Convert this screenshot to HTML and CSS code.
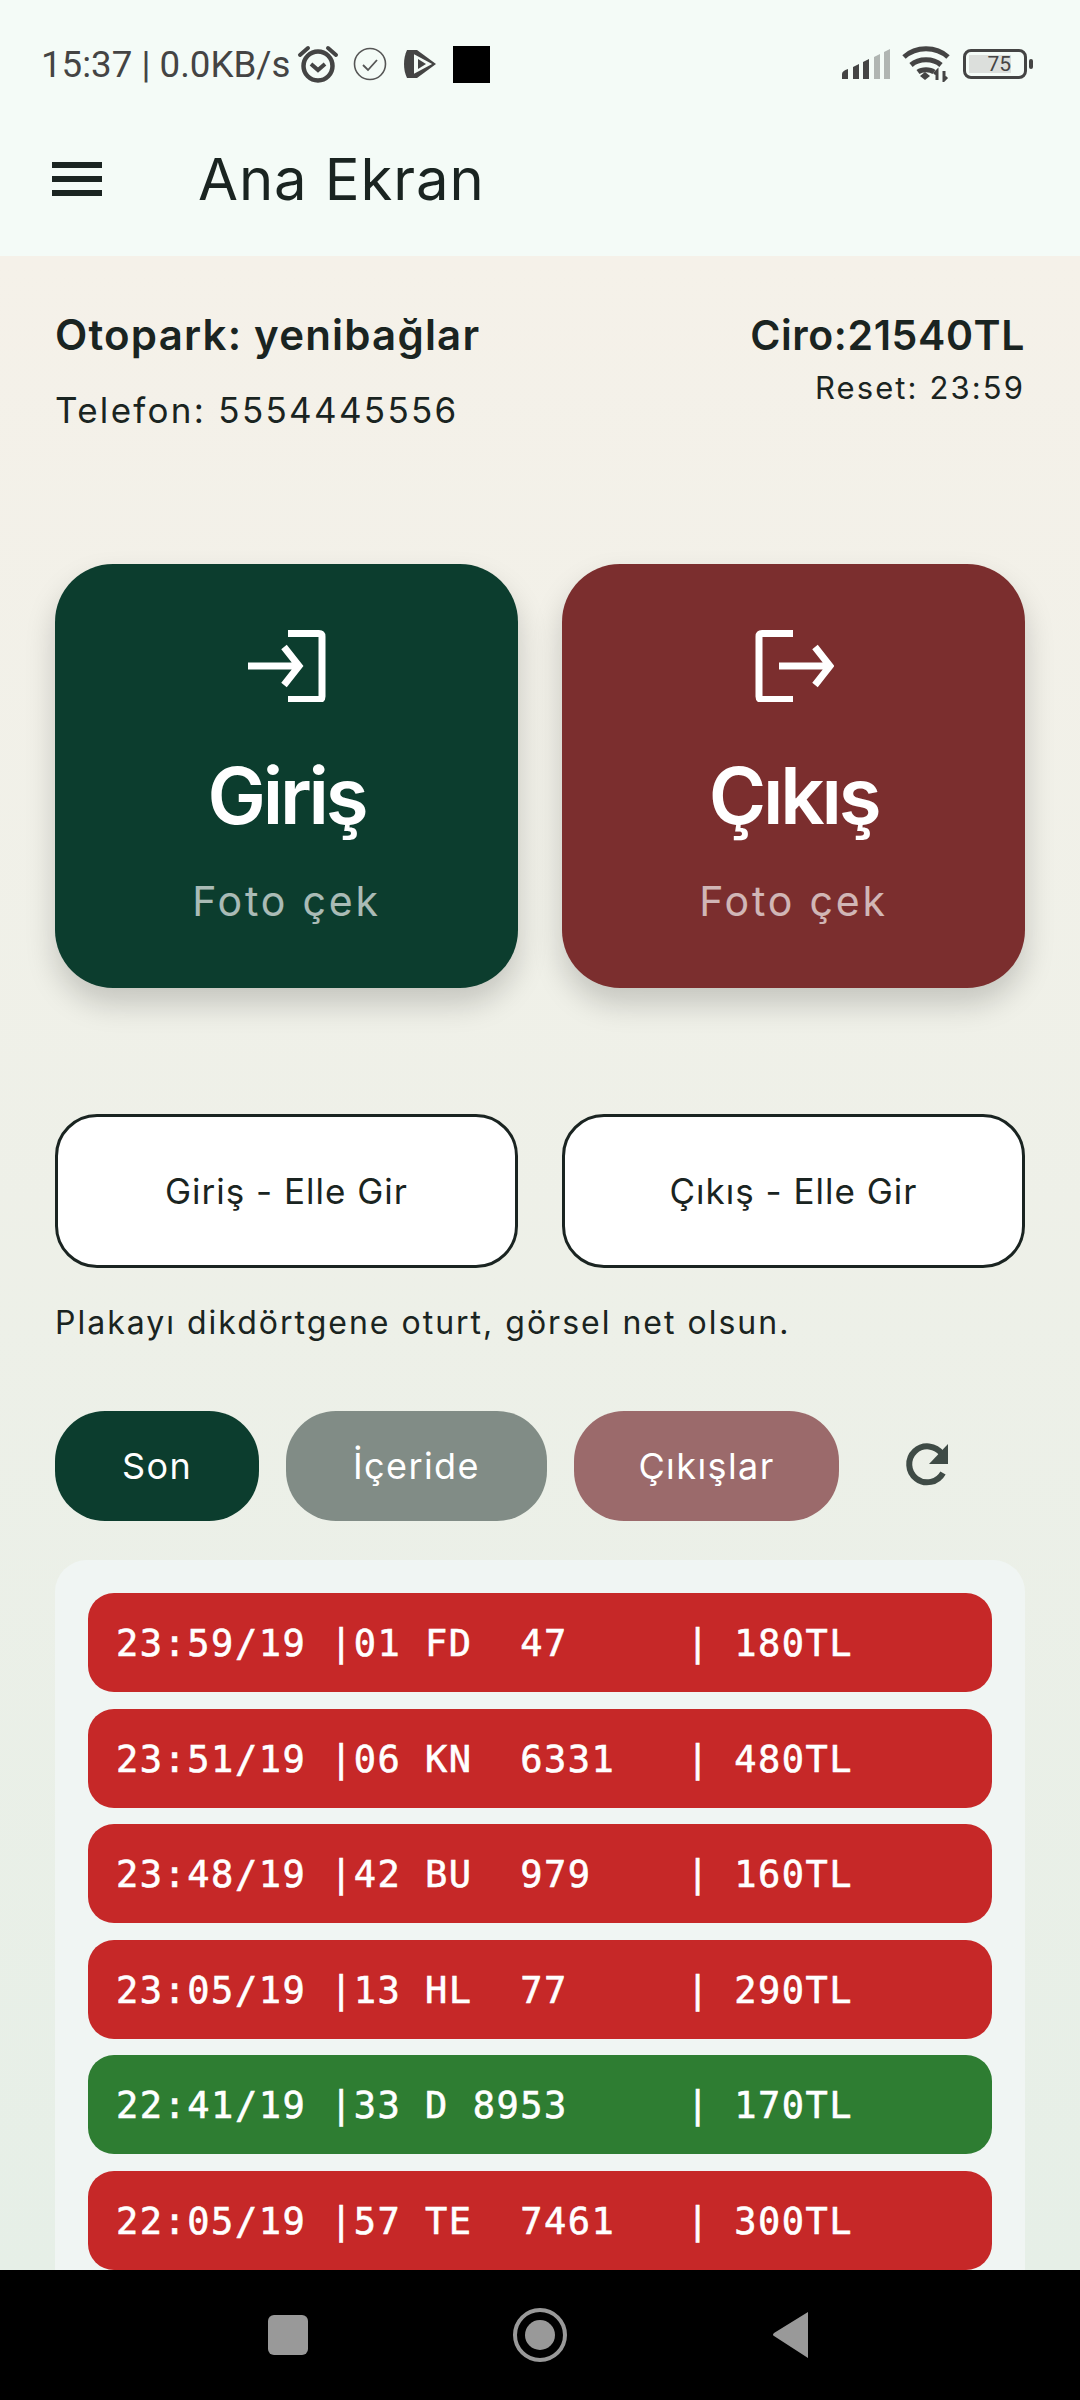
FILE: index.html
```html
<!DOCTYPE html>
<html lang="tr">
<head>
    <meta charset="UTF-8">
    <title>Ana Ekran</title>
    <link rel="stylesheet" href="styles.css">
</head>
<body>
<div class="ekran">
    <div class="ust">
        <div class="durum">
            <span class="saat">15:37 | 0.0KB/s</span>
            <svg class="ikon-alarm" width="42" height="40" viewBox="0 0 42 40">
                <circle cx="21" cy="22" r="14.5" fill="none" stroke="#444" stroke-width="4.5"/>
                <path d="M14 20l7 6 7-6" fill="none" stroke="#444" stroke-width="4"/>
                <path d="M3 11l8-7M39 11l-8-7" fill="none" stroke="#444" stroke-width="4" stroke-linecap="round"/>
            </svg>
            <svg class="ikon-tik" width="34" height="34" viewBox="0 0 34 34">
                <circle cx="17" cy="17" r="15.5" fill="none" stroke="#555" stroke-width="1.6"/>
                <path d="M10 18l5 5 9-10" fill="none" stroke="#555" stroke-width="1.8"/>
            </svg>
            <svg class="ikon-play" width="34" height="30" viewBox="0 0 34 30">
                <path d="M4 1l10 0 19 14-19 14-10 0c-4-8-4-20 0-28z" fill="#444"/>
                <path d="M12 7l15 8-15 8z" fill="#f4fbf7" stroke="#f4fbf7" stroke-width="2"/>
                <path d="M15 10l8 5-8 5z" fill="#444"/>
            </svg>
            <span class="kare"></span>
            <span class="bosluk"></span>
            <svg class="ikon-sinyal" width="48" height="32" viewBox="0 0 48 32">
                <path d="M0 31v-5q0-3 6-5v10z" fill="#444"/>
                <path d="M11 31v-12l6-3v15z" fill="#444"/>
                <path d="M21 31v-17l6-3v20z" fill="#444"/>
                <path d="M32 31v-22l6-3v25z" fill="#b0b5b2"/>
                <path d="M42 31v-27l6-3v30z" fill="#b0b5b2"/>
            </svg>
            <svg class="ikon-wifi" width="48" height="36" viewBox="0 0 48 36">
                <path d="M2 11c12-11 32-11 44 0" fill="none" stroke="#444" stroke-width="5"/>
                <path d="M9 19c8-7 22-7 30 0" fill="none" stroke="#444" stroke-width="5"/>
                <path d="M16 26c4-3 12-3 16 0" fill="none" stroke="#444" stroke-width="5"/>
                <path d="M18 30l5-4 5 4-5 4z" fill="#444"/>
                <path d="M35 34v-9l-3 3M42 25v9l3-3" fill="none" stroke="#444" stroke-width="3"/>
            </svg>
            <div class="pil">
                <div class="pil-govde"><span class="pil-dolu">75</span></div>
                <span class="pil-uc"></span>
            </div>
        </div>
        <div class="baslik">
            <div class="menu"><span></span><span></span><span></span></div>
            <h1>Ana Ekran</h1>
        </div>
    </div>

    <div class="icerik">
        <div class="bilgi">
            <div>
                <div class="otopark">Otopark: yenibağlar</div>
                <div class="telefon">Telefon: 5554445556</div>
            </div>
            <div class="sag">
                <div class="ciro">Ciro:21540TL</div>
                <div class="reset">Reset: 23:59</div>
            </div>
        </div>

        <div class="kartlar">
            <div class="kart giris">
                <svg width="80" height="72" viewBox="0 0 80 72">
                    <path d="M41 3.500h31q3 0 3 3v60q0 3-3 3H41" fill="none" stroke="#fff" stroke-width="7"/>
                    <path d="M1 36h50M37 17l15 19-15 19" fill="none" stroke="#fff" stroke-width="7"/>
                </svg>
                <div class="kart-ad">Giriş</div>
                <div class="kart-alt">Foto çek</div>
            </div>
            <div class="kart cikis">
                <svg width="80" height="72" viewBox="0 0 80 72">
                    <path d="M39 3.500H8q-3 0-3 3v60q0 3 3 3h31" fill="none" stroke="#fff" stroke-width="7"/>
                    <path d="M25 36h50M61 17l15 19-15 19" fill="none" stroke="#fff" stroke-width="7"/>
                </svg>
                <div class="kart-ad">Çıkış</div>
                <div class="kart-alt">Foto çek</div>
            </div>
        </div>

        <div class="elle">
            <button>Giriş - Elle Gir</button>
            <button>Çıkış - Elle Gir</button>
        </div>
        <p class="ipucu">Plakayı dikdörtgene oturt, görsel net olsun.</p>

        <div class="sekmeler">
            <span class="sekme son">Son</span>
            <span class="sekme iceride">İçeride</span>
            <span class="sekme cikislar">Çıkışlar</span>
            <svg class="yenile" width="48" height="48" viewBox="0 0 48 48">
                <path d="M39 31a18 18 0 1 1-1-19" fill="none" stroke="#3f4b46" stroke-width="6"/>
                <path d="M44 2v20H25z" fill="#3f4b46"/>
            </svg>
        </div>

        <div class="liste">
            <div class="satir kirmizi">23:59/19 |01 FD  47     | 180TL</div>
            <div class="satir kirmizi">23:51/19 |06 KN  6331   | 480TL</div>
            <div class="satir kirmizi">23:48/19 |42 BU  979    | 160TL</div>
            <div class="satir kirmizi">23:05/19 |13 HL  77     | 290TL</div>
            <div class="satir yesil">22:41/19 |33 D 8953     | 170TL</div>
            <div class="satir kirmizi">22:05/19 |57 TE  7461   | 300TL</div>
        </div>
    </div>

    <div class="alt-bar">
        <span class="nav-kare"></span>
        <svg width="56" height="56" viewBox="0 0 56 56">
            <circle cx="28" cy="28" r="25" fill="none" stroke="#999" stroke-width="4"/>
            <circle cx="28" cy="28" r="15" fill="#999"/>
        </svg>
        <svg width="38" height="48" viewBox="0 0 38 48">
            <path d="M36 1v46L2 25q-2-1 0-3z" fill="#999"/>
        </svg>
    </div>
</div>
</body>
</html>
```

FILE: styles.css
```css
* {
    box-sizing: border-box;
}
html, body {
    margin: 0;
    padding: 0;
}
body {
    font-family: Inter, "Noto Sans", sans-serif;
    color: #1a2421;
}
.ekran {
    width: 1080px;
    height: 2400px;
    display: flex;
    flex-direction: column;
    overflow: hidden;
}

/* ust bolum */
.ust {
    height: 256px;
    background-color: #f4fbf7;
}
.durum {
    height: 100px;
    padding: 28px 47px 0 41px;
    display: flex;
    align-items: center;
}
.saat {
    font-family: Roboto, sans-serif;
    font-size: 36.700px;
    color: #444;
    white-space: nowrap;
}
.ikon-alarm {
    margin-left: 7px;
}
.ikon-tik {
    margin-left: 14px;
}
.ikon-play {
    margin-left: 16px;
}
.kare {
    width: 37px;
    height: 37px;
    margin-left: 16px;
    background-color: #000;
}
.bosluk {
    flex: 1;
}
.ikon-sinyal {
    margin-right: 12px;
}
.ikon-wifi {
    margin-right: 13px;
}
.pil {
    display: flex;
    align-items: center;
}
.pil-govde {
    width: 64px;
    height: 30px;
    border: 3px solid #444;
    border-radius: 8px;
    padding: 3px;
}
.pil-dolu {
    display: block;
    width: 42px;
    height: 18px;
    background-color: #dcdfdc;
    font-family: Roboto, sans-serif;
    font-size: 21px;
    line-height: 18px;
    color: #444;
    text-align: right;
}
.pil-uc {
    width: 4px;
    height: 10px;
    margin-left: 2px;
    background-color: #444;
    border-radius: 2px;
}
.baslik {
    height: 156px;
    padding: 2px 0 0 52px;
    display: flex;
    align-items: center;
}
.menu {
    width: 50px;
    margin-right: 97px;
    display: flex;
    flex-direction: column;
    gap: 8px;
}
.menu span {
    height: 6px;
    background-color: #1a2421;
}
h1 {
    margin: 0 0 0 -1px;
    font-size: 58px;
    font-weight: 400;
    line-height: 1;
    letter-spacing: 0.9px;
}

/* icerik */
.icerik {
    flex: 1;
    min-height: 0;
    padding: 50px 55px 0;
    display: flex;
    flex-direction: column;
    background: linear-gradient(#f5f1e9, #e6efe7);
}
.bilgi {
    height: 258px;
    display: flex;
    justify-content: space-between;
}
.otopark {
    font-size: 42px;
    font-weight: 600;
    line-height: 58px;
    letter-spacing: 1.2px;
}
.telefon {
    margin-top: 17px;
    font-size: 35px;
    line-height: 58px;
    letter-spacing: 2.3px;
}
.sag {
    text-align: right;
}
.ciro {
    font-size: 41px;
    font-weight: 600;
    line-height: 58px;
    letter-spacing: 0.6px;
}
.reset {
    margin-top: 1px;
    font-size: 31px;
    line-height: 46px;
    letter-spacing: 2.1px;
}
.kartlar {
    display: flex;
    gap: 44px;
}
.kart {
    flex: 1;
    height: 424px;
    padding-top: 66px;
    border-radius: 58px;
    display: flex;
    flex-direction: column;
    align-items: center;
    color: #fff;
    box-shadow: 0 16px 30px rgba(0, 0, 0, 0.18);
}
.giris {
    background-color: #0c3d2e;
}
.cikis {
    background-color: #7b2e2e;
}
.kart-ad {
    margin-top: 44px;
    font-size: 78px;
    font-weight: 600;
    line-height: 100px;
    letter-spacing: -3.2px;
}
.kart-alt {
    margin-top: 29px;
    font-size: 41px;
    line-height: 52px;
    letter-spacing: 2.8px;
    opacity: 0.65;
}
.elle {
    margin-top: 126px;
    display: flex;
    gap: 44px;
}
.elle button {
    flex: 1;
    height: 154px;
    background-color: #fff;
    border: 3px solid #1a2421;
    border-radius: 42px;
    font-family: inherit;
    font-size: 35px;
    letter-spacing: 1px;
    color: #1a2421;
}
.ipucu {
    margin: 30px 0 0;
    font-size: 32px;
    line-height: 50px;
    letter-spacing: 2px;
}
.sekmeler {
    margin-top: 63px;
    display: flex;
    align-items: center;
}
.sekme {
    height: 110px;
    border-radius: 50px;
    display: flex;
    align-items: center;
    justify-content: center;
    font-size: 36px;
    letter-spacing: 1.4px;
    color: #fff;
}
.son {
    width: 204px;
    background-color: #0c3d2e;
}
.iceride {
    width: 261px;
    margin-left: 27px;
    background-color: #818c86;
}
.cikislar {
    width: 265px;
    margin-left: 27px;
    background-color: #9b6a6b;
}
.yenile {
    margin-left: 65px;
}
.liste {
    flex: 1;
    margin-top: 39px;
    padding: 33px 33px 0;
    background-color: #f0f5f3;
    border-radius: 32px 32px 0 0;
    display: flex;
    flex-direction: column;
    gap: 16.5px;
}
.satir {
    height: 99px;
    flex: none;
    padding: 2px 0 0 28px;
    border-radius: 26px;
    display: flex;
    align-items: center;
    font-family: "DejaVu Sans Mono", monospace;
    font-size: 37px;
    letter-spacing: 1.5px;
    -webkit-text-stroke: 0.6px #fff;
    white-space: pre;
    color: #fff;
}
.kirmizi {
    background-color: #c62828;
}
.yesil {
    background-color: #2e7d32;
}

/* alt bar */
.alt-bar {
    height: 130px;
    padding-right: 2px;
    background-color: #000;
    display: flex;
    align-items: center;
    justify-content: center;
    gap: 204px;
}
.nav-kare {
    width: 40px;
    height: 40px;
    background-color: #999;
    border-radius: 6px;
}
```
